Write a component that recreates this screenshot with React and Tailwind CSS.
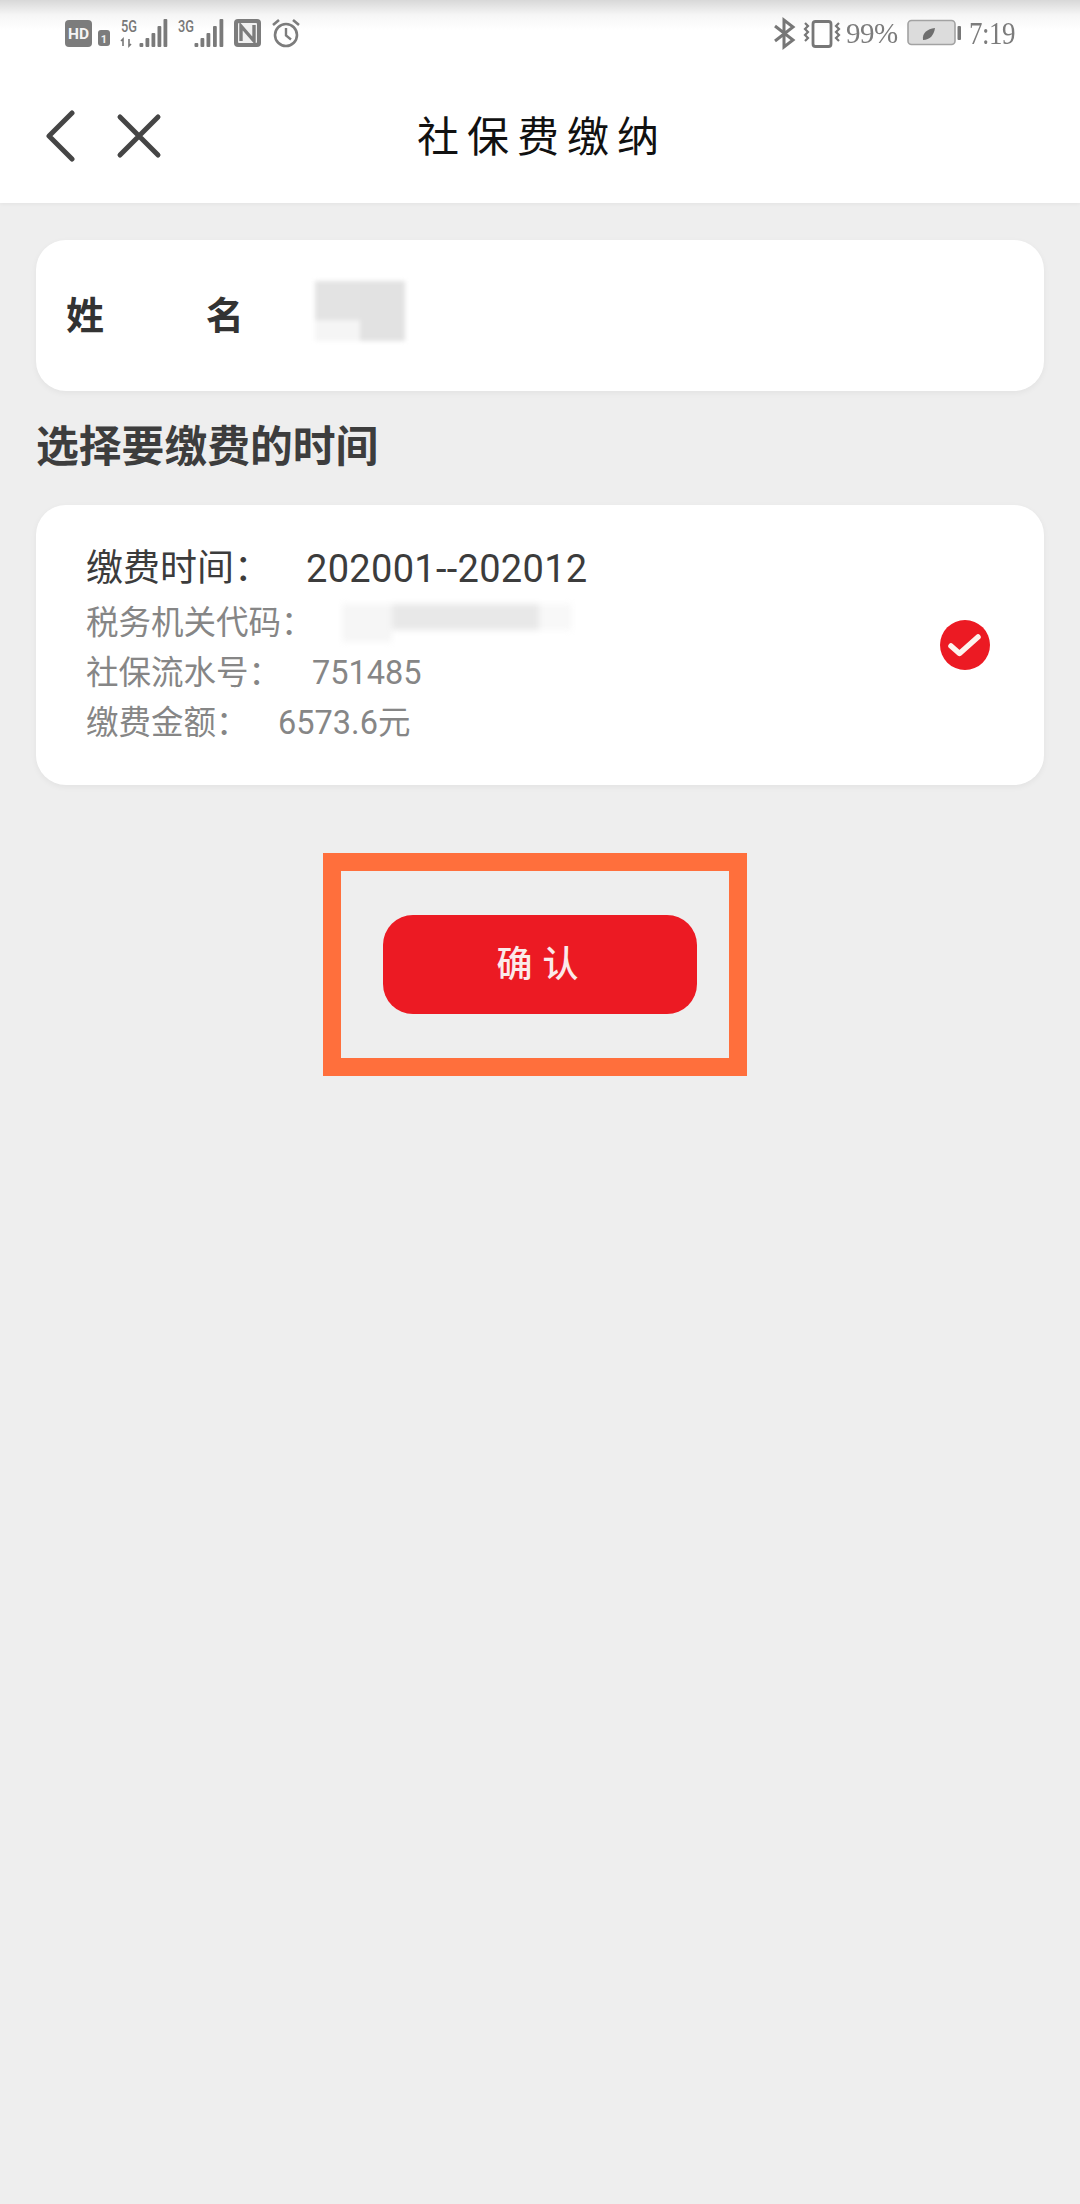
const CJK = { fontFamily: '"Roboto","Noto Sans CJK SC",sans-serif' };

function StatusLeft() {
  const bars = (xs, hs, bottom) =>
    xs.map((x, i) => <rect key={x} x={x} y={bottom - hs[i]} width="3.8" height={hs[i]} rx="1" fill="#7a7a7a" />);
  return (
    <svg width="245" height="36" viewBox="60 15 245 36" className="block shrink-0">
      <rect x="65" y="20" width="27" height="27" rx="4" fill="#7c7c7c" />
      <text x="78.5" y="39" textAnchor="middle" fontSize="15.5" fontWeight="700" fill="#f4f4f4" fontFamily="Roboto, sans-serif">HD</text>
      <rect x="98" y="30" width="12" height="16" rx="3" fill="#7c7c7c" />
      <text x="104" y="43" textAnchor="middle" fontSize="11" fontWeight="700" fill="#eee" fontFamily="Roboto, sans-serif">1</text>
      <text x="121" y="32" fontSize="16" fontWeight="500" fill="#777" fontFamily="Roboto, sans-serif" textLength="16" lengthAdjust="spacingAndGlyphs">5G</text>
      <path d="M123 46v-7l-2 2M129 39v7l2-2" fill="none" stroke="#777" strokeWidth="1.6" />
      {bars([139.5, 145.5, 151.5, 157.5, 163.5], [4, 9, 14, 21, 28], 47)}
      <text x="178" y="32" fontSize="16" fontWeight="500" fill="#777" fontFamily="Roboto, sans-serif" textLength="16" lengthAdjust="spacingAndGlyphs">3G</text>
      {bars([194.5, 200.5, 206.5, 213, 219.5], [4, 9, 14, 21, 28], 47)}
      <rect x="234" y="19" width="27" height="28" rx="4" fill="#7c7c7c" />
      <rect x="238" y="23" width="19" height="20" rx="1" fill="#f0f0f0" />
      <path d="M241 41V26l13 15V25" fill="none" stroke="#7c7c7c" strokeWidth="3.4" />
      <circle cx="286" cy="35" r="11" fill="none" stroke="#7c7c7c" strokeWidth="2.6" />
      <path d="M286 28v7.5l5 4" fill="none" stroke="#7c7c7c" strokeWidth="2.4" />
      <path d="M273 25l6-5M299 25l-6-5" fill="none" stroke="#7c7c7c" strokeWidth="2.6" />
    </svg>
  );
}

function StatusRight() {
  return (
    <div className="flex items-center h-[36px] text-[#7c7c7c]">
      <svg width="72" height="36" viewBox="770 15 72 36" className="block shrink-0">
        <path d="M775 26l18 14-9 7V20l9 7-18 14" fill="none" stroke="#777" strokeWidth="3" />
        <rect x="813" y="21.5" width="18" height="25" rx="2.5" fill="none" stroke="#777" strokeWidth="2.8" />
        <path d="M805 23l3 3-3 3 3 3-3 3 3 3-3 3M839 23l-3 3 3 3-3 3 3 3-3 3 3 3" fill="none" stroke="#777" strokeWidth="2.2" />
      </svg>
      <span className="ml-[4px] w-[61px] text-[29px] leading-none scale-y-[1.05] tracking-[-0.5px]" style={{ fontFamily: '"Liberation Serif",serif' }}>99%</span>
      <svg width="55" height="28" viewBox="907 20 55 28" className="block shrink-0">
        <rect x="908" y="21.5" width="47" height="24" rx="3.5" fill="#dcdcdc" stroke="#a2a2a2" strokeWidth="1.6" />
        <rect x="957.5" y="27" width="3.5" height="14" rx="1" fill="#777" />
        <path d="M923 41c-1-7 4-11 12-12-1 7-5 12-12 12z" fill="#6e6e6e" />
      </svg>
      <span className="ml-[7px] w-[45px] text-[27px] leading-none scale-y-[1.2] tracking-[-0.5px]" style={{ fontFamily: '"Liberation Serif",serif' }}>7:19</span>
    </div>
  );
}

function Header() {
  return (
    <header className="bg-white h-[203px] shadow-[0_1px_4px_rgba(0,0,0,0.05)] relative">
      <div className="h-[30px] absolute inset-x-0 top-0 bg-gradient-to-b from-[#d8d8d8] via-[#f6f6f6] to-white" />
      <div className="relative flex justify-between pl-[60px] pr-[66px] pt-[15px] h-[69px]">
        <StatusLeft />
        <StatusRight />
      </div>
      <div className="relative flex items-center h-[134px] pl-[44px]">
        <svg width="34" height="52" viewBox="0 0 34 52" className="block shrink-0">
          <path d="M28 3L5 26l23 23" fill="none" stroke="#454545" strokeWidth="5" strokeLinecap="round" strokeLinejoin="round" />
        </svg>
        <svg width="46" height="46" viewBox="0 0 46 46" className="block shrink-0 ml-[38px]">
          <path d="M4 4l38 38M42 4L4 42" fill="none" stroke="#454545" strokeWidth="5" strokeLinecap="round" />
        </svg>
        <h1 className="ml-[255px] -mt-[5px] text-[42px] leading-none font-normal tracking-[8px] text-[#111]" style={{ fontFamily: '"Noto Sans CJK SC",sans-serif' }}>社保费缴纳</h1>
      </div>
    </header>
  );
}

function NameCard() {
  return (
    <section className="mx-[36px] h-[151px] bg-white rounded-[30px] shadow-[0_2px_6px_rgba(0,0,0,0.05)] flex items-center pl-[30px]">
      <div className="flex justify-between w-[178px] text-[38px] font-bold text-[#333] leading-none" style={CJK}>
        <span>姓</span>
        <span>名</span>
      </div>
      <div className="ml-[71px] flex w-[90px] h-[60px] blur-[2px] -mt-[10px]">
        <div className="w-[45px] h-full bg-gradient-to-b from-[#e3e3e3] from-[65%] to-[#f5f5f5] to-[66%]" />
        <div className="w-[45px] h-full bg-[#e2e2e2]" />
      </div>
    </section>
  );
}

function PaymentCard() {
  return (
    <section className="mx-[36px] h-[280px] bg-white rounded-[30px] shadow-[0_2px_6px_rgba(0,0,0,0.05)] flex items-center justify-between pl-[50px] pr-[54px]" style={CJK}>
      <div className="text-[32.5px] leading-[50px] text-[#868686] -mt-[2px]">
        <div className="flex items-center h-[58px] text-[#3c3c3c]">
          <span className="text-[37px] w-[220px]">缴费时间：</span>
          <span className="text-[38px] tracking-[0.3px] [font-variant-ligatures:none]">202001--202012</span>
        </div>
        <div className="flex items-center h-[50px]">
          <span>税务机关代码：</span>
          <div className="ml-[28px] h-[38px] w-[230px] blur-[3px] flex items-start">
            <div className="w-[50px] h-full bg-[#f6f6f6]" />
            <div className="w-[147px] h-[26px] bg-[#e8e8e8]" />
            <div className="w-[33px] h-[26px] bg-[#f8f8f8]" />
          </div>
        </div>
        <div className="flex items-center h-[50px]">
          <span className="w-[226px]">社保流水号：</span>
          <span>751485</span>
        </div>
        <div className="flex items-center h-[50px]">
          <span className="w-[192px]">缴费金额：</span>
          <span>6573.6元</span>
        </div>
      </div>
      <svg width="50" height="50" viewBox="0 0 50 50" className="block shrink-0">
        <circle cx="25" cy="25" r="25" fill="#ec1a23" />
        <path d="M11 26l8.500 7.500L38 17" fill="none" stroke="#fdf3ee" strokeWidth="5.500" strokeLinecap="round" strokeLinejoin="round" />
      </svg>
    </section>
  );
}

export default function App() {
  return (
    <div className="w-[1080px] min-h-[2204px] bg-[#eeeeee] flex flex-col">
      <Header />
      <div className="pt-[37px] flex flex-col">
        <NameCard />
        <h2 className="mt-[33px] mb-[34px] ml-[36px] h-[47px] flex items-center text-[42.8px] leading-none font-bold text-[#3d3d3d]" style={CJK}>选择要缴费的时间</h2>
        <PaymentCard />
        <div className="mt-[68px] ml-[323px]">
          <div className="w-[424px] h-[223px] border-[18px] border-[#ff6f3c] flex items-center pl-[42px]">
            <button className="w-[314px] h-[99px] rounded-[30px] bg-[#ec1a23] text-[#fbeaea] text-[36px] font-medium leading-none tracking-[10px] pl-[5px]" style={CJK}>确认</button>
          </div>
        </div>
      </div>
    </div>
  );
}
